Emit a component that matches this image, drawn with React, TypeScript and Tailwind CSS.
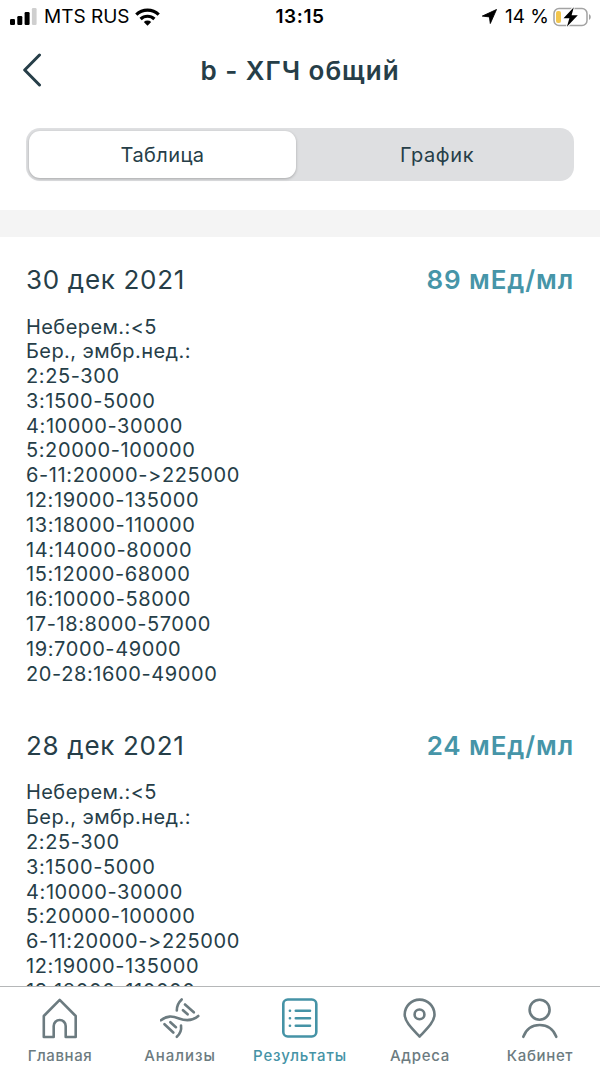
import type { ReactNode } from 'react'

interface Norm {
  readonly text:      string
  readonly isCaption?: boolean
}

interface Result {
  readonly date:  string
  readonly value: string
  readonly norms: readonly Norm[]
}

interface NavItem {
  readonly label:     string
  readonly icon:      ReactNode
  readonly className: string
  readonly isActive?: boolean
}

const NORMS: Norm[] = [
  { text: 'Неберем.:<5', isCaption: true },
  { text: 'Бер., эмбр.нед.:', isCaption: true },
  { text: '2:25-300' },
  { text: '3:1500-5000' },
  { text: '4:10000-30000' },
  { text: '5:20000-100000' },
  { text: '6-11:20000->225000' },
  { text: '12:19000-135000' },
  { text: '13:18000-110000' },
  { text: '14:14000-80000' },
  { text: '15:12000-68000' },
  { text: '16:10000-58000' },
  { text: '17-18:8000-57000' },
  { text: '19:7000-49000' },
  { text: '20-28:1600-49000' },
]

const RESULTS: Result[] = [
  { date: '30 дек 2021', value: '89 мЕд/мл', norms: NORMS },
  { date: '28 дек 2021', value: '24 мЕд/мл', norms: NORMS.slice(0, 9) },
]

const NAV: NavItem[] = [
  {
    label: 'Главная',
    className: 'tracking-[0.6px]',
    icon: <path d="M19.7 3.8 3.8 20V41H13.7V30a6 6 0 0 1 12 0V41H35.7V20Z" />,
  },
  {
    label: 'Анализы',
    className: 'tracking-[0.95px]',
    icon: (
      <>
        <path d="M21.7 3.5Q16.8 8 16.8 14.5" />
        <path d="M.9 24.3C7 19.5 12 19.8 19 22.5c8 3 13.5 2.5 19.3-2.5" />
        <path d="M21 29.5Q22 36 16.8 40.8" />
        <path d="m25 8.5 8.8 7.8M23 14.2l4.6 4.1M4.5 28.2l8.8 8.3M10.4 26.2l5.5 5" />
      </>
    ),
  },
  {
    label: 'Результаты',
    className: 'tracking-[0.9px]',
    isActive: true,
    icon: (
      <>
        <rect x="3.3" y="3.5" width="33" height="37" rx="4.5" />
        <path d="M15.8 14.7H30M15.8 22.2H30M15.8 29.7H30" />
        <path d="M9.9 14.7h.1M9.9 22.2h.1M9.9 29.7h.1" />
      </>
    ),
  },
  {
    label: 'Адреса',
    className: 'tracking-[0.75px]',
    icon: (
      <>
        <path d="M19.6 40.5C13 33.5 4.7 26 4.7 18.5a14.9 14.9 0 0 1 29.8 0C34.5 26 26.2 33.5 19.6 40.5Z" />
        <circle cx="19.5" cy="18.4" r="4.9" />
      </>
    ),
  },
  {
    label: 'Кабинет',
    className: 'tracking-[0.65px]',
    icon: (
      <>
        <circle cx="19.6" cy="13.7" r="10" />
        <path d="M3.3 40.8C6 33.5 12 29 19.7 29S33.5 33.5 36.3 40.8" />
      </>
    ),
  },
]

function StatusBar() {
  return (
    <div className="grid h-8 shrink-0 grid-cols-[1fr_auto_1fr] items-center text-[19px] leading-8 text-black">
      <div className="flex items-center pl-[10px]">
        <svg width="27" height="18" viewBox="0 0 27 18" fill="currentColor">
          <rect x="0" y="11" width="5" height="6" rx="1.2" />
          <rect x="7.3" y="8" width="5" height="9" rx="1.2" />
          <rect x="14.6" y="4" width="5" height="13" rx="1.2" />
          <rect x="21.9" y="0" width="4.7" height="17" rx="1.2" fill="#cfcfcf" />
        </svg>
        <span className="ml-[7px] w-[85px] pt-px whitespace-nowrap">MTS RUS</span>
        <svg className="ml-[6px]" width="25" height="18" viewBox="0 0 25 18" fill="none" stroke="currentColor" strokeWidth="3.2">
          <path d="M1.3 6.7a16 16 0 0 1 22.4 0" />
          <path d="M5.6 11a10 10 0 0 1 13.8 0" />
          <path d="M12.5 17.7 8.8 13.9a5.4 5.4 0 0 1 7.4 0Z" fill="currentColor" stroke="none" />
        </svg>
      </div>
      <span className="pt-px text-[19px] font-semibold tracking-[0.6px]">13:15</span>
      <div className="flex items-center justify-end pr-[8px]">
        <svg width="15" height="15" viewBox="0 0 15 15" fill="currentColor">
          <path d="M14.5.5 8.3 14.5 7.4 7.9.3 7.1Z" stroke="currentColor" strokeWidth=".9" strokeLinejoin="round" />
        </svg>
        <span className="ml-[8px] w-[44px] pt-px whitespace-nowrap">14 %</span>
        <svg className="ml-[4px]" width="39" height="20" viewBox="0 0 39 20">
          <rect x="1" y="1.5" width="33" height="17" rx="5" fill="none" stroke="#a3a3a3" strokeWidth="1.5" />
          <path d="M36 7v6q1.8-1 1.8-3t-1.8-3Z" fill="#a3a3a3" />
          <rect x="3" y="4" width="5" height="12" rx="2" fill="#f2c64e" />
          <path d="M20.8.2 10.5 11.3h5.9L13.9 19.8 24.8 8.2h-6.2Z" fill="#000" stroke="#fff" strokeWidth="2" paintOrder="stroke" />
        </svg>
      </div>
    </div>
  )
}

function Header() {
  return (
    <header className="grid h-[76px] shrink-0 grid-cols-[60px_1fr_60px] items-center">
      <svg className="ml-[22px]" width="22" height="34" viewBox="0 0 22 34" fill="none" stroke="currentColor" strokeWidth="3" strokeLinecap="round" strokeLinejoin="round">
        <path d="M17.5 2 2.7 17l14.8 15" />
      </svg>
      <h1 className="text-center text-[26px] font-semibold tracking-[1px]">b - ХГЧ общий</h1>
    </header>
  )
}

function Tabs() {
  return (
    <div className="mx-[26px] mt-5 flex h-[53px] shrink-0 rounded-[14px] bg-[#dedfe1] p-[3px] text-[20px] tracking-[0.4px]">
      <button className="w-[267px] rounded-[11px] bg-white shadow-[0_1px_3px_rgba(0,0,0,0.25)]">Таблица</button>
      <button className="flex-1 pl-[7px] tracking-[0.6px]">График</button>
    </div>
  )
}

function ResultCard({ date, value, norms }: Result) {
  return (
    <section className="px-[26px] pt-[27px] pb-[16.5px]">
      <div className="flex h-8 items-center justify-between text-[26px] leading-8 whitespace-nowrap">
        <h2 className="tracking-[0.7px]">{date}</h2>
        <span className="font-semibold tracking-[0.9px] text-[#4695a8]">{value}</span>
      </div>
      <ul className="mt-[18.5px] text-[20px] leading-[24.8px]">
        {norms.map(({ text, isCaption }) => (
          <li key={text} className={isCaption ? 'tracking-[0.42px]' : 'tracking-[0.6px]'}>
            {text}
          </li>
        ))}
      </ul>
    </section>
  )
}

function BottomNav() {
  return (
    <nav className="grid h-20 shrink-0 grid-cols-5 border-t border-[#b5b7b8] bg-white">
      {NAV.map((item) => (
        <div
          key={item.label}
          className={`flex flex-col items-center pt-[9px] ${item.isActive ? 'text-[#4593a6]' : 'text-[#6c7b80]'}`}
        >
          <svg width="40" height="44" viewBox="0 0 40 44" fill="none" stroke="currentColor" strokeWidth="2.6" strokeLinecap="round" strokeLinejoin="round">
            {item.icon}
          </svg>
          <span className={`mt-[6px] text-[15px] leading-5 font-medium whitespace-nowrap ${item.className}`}>
            {item.label}
          </span>
        </div>
      ))}
    </nav>
  )
}

export default function App() {
  return (
    <div className="flex h-[1066px] w-[600px] flex-col overflow-hidden bg-white font-['Inter','Liberation_Sans',sans-serif] text-[#263e48]">
      <StatusBar />
      <Header />
      <Tabs />
      <div className="mt-[29px] h-[27px] shrink-0 bg-[#f4f4f4]" />
      <main className="min-h-0 flex-1 overflow-hidden">
        {RESULTS.map((result) => (
          <ResultCard key={result.date} {...result} />
        ))}
      </main>
      <BottomNav />
    </div>
  )
}
